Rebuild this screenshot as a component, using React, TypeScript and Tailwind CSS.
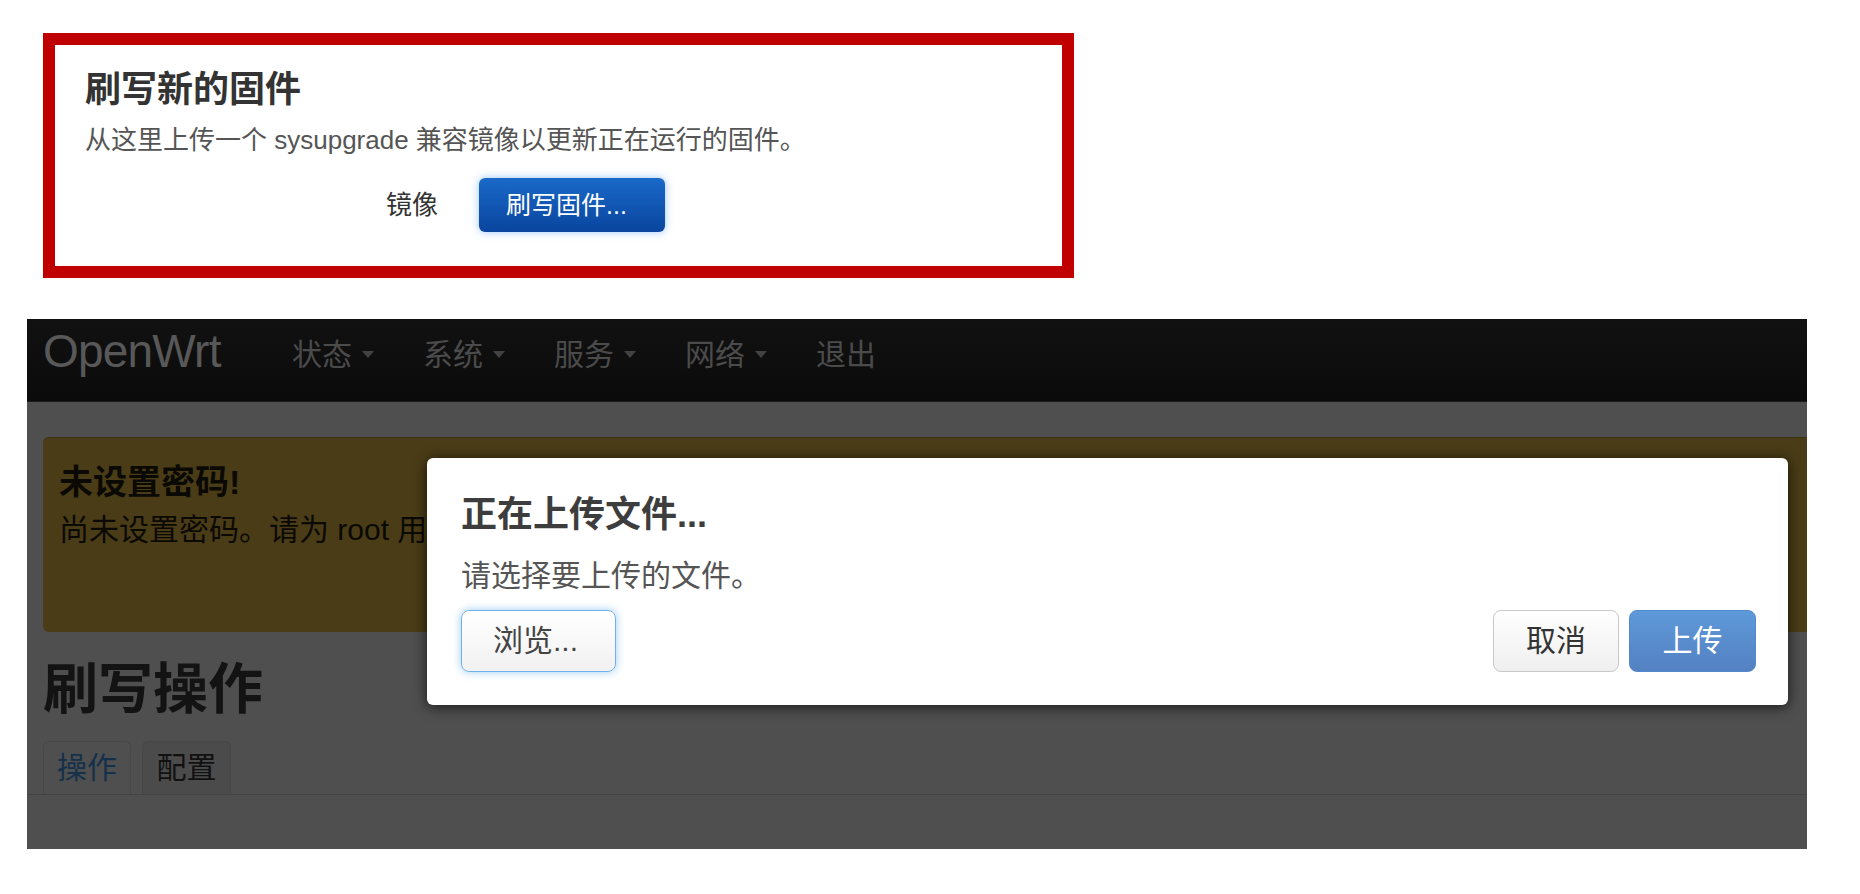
import React from "react";

const navItems = [
  { label: "状态", caret: true },
  { label: "系统", caret: true },
  { label: "服务", caret: true },
  { label: "网络", caret: true },
  { label: "退出", caret: false },
];

function Caret() {
  return <span className="inline-block w-0 h-0 border-x-[6.5px] border-x-transparent border-t-[7px] border-t-[#424242]" />;
}

export default function App() {
  return (
    <div className="w-[1860px] h-[894px] bg-white overflow-hidden font-['Liberation_Sans','Noto_Sans_CJK_SC',sans-serif]">
      {/* Top: highlighted firmware flash box */}
      <div className="pt-[33px] pl-[43px]">
        <div className="w-[1031px] h-[245px] border-[12px] border-[#c00000] bg-white pl-[30px] pt-[23px]">
          <h2 className="text-[36px] leading-[44px] font-bold text-[#333]">刷写新的固件</h2>
          <p className="mt-[11px] text-[26px] leading-[34px] text-[#555]">
            从这里上传一个 sysupgrade 兼容镜像以更新正在运行的固件。
          </p>
          <div className="mt-[21px] ml-[301px] flex items-center gap-[41px]">
            <span className="text-[26px] leading-[34px] text-[#333]">镜像</span>
            <button className="w-[186px] h-[54px] rounded-[6px] bg-linear-to-b from-[#1a69c9] to-[#0a459e] text-white text-[25px] leading-[30px] flex items-center pl-[27px] shadow-[0_0_9px_rgba(70,150,255,0.55)]">
              刷写固件...
            </button>
          </div>
        </div>
      </div>

      {/* Bottom: dimmed OpenWrt page with upload dialog */}
      <div className="mt-[41px] ml-[27px] w-[1780px] h-[530px] bg-[#4f4f4f] relative overflow-hidden">
        <div className="h-[83px] bg-linear-to-b from-[#111111] to-[#0b0b0b] border-b border-[#1c1c1c] flex">
          <div className="w-[265px] pl-[16px] pb-[18px] flex items-center text-[46px] text-[#585858] tracking-[-0.8px]">
            OpenWrt
          </div>
          {navItems.map((it) => (
            <div key={it.label} className="w-[131px] pb-[11px] flex items-center gap-[10px] text-[30px] leading-[36px] text-[#4b4b4b]">
              <span>{it.label}</span>
              {it.caret && <Caret />}
            </div>
          ))}
        </div>

        <div className="pl-[16px] pt-[35px]">
          <div className="h-[195px] mr-[-20px] rounded-[6px] bg-[#4a3c16] border-t border-[#3f3210] pl-[16px] pt-[24px]">
            <div className="text-[34px] leading-[40px] font-bold text-[#0b0904]">未设置密码!</div>
            <div className="mt-[10px] text-[30px] leading-[36px] text-[#0b0904]">
              尚未设置密码。请为 root 用户设置密码。
            </div>
          </div>

          <h1 className="mt-[25px] text-[55px] leading-[64px] font-bold text-[#131313]">刷写操作</h1>

          <div className="mt-[20px] ml-[-16px] pl-[16px] flex gap-[11px] border-b border-[#444]">
            <div className="w-[88px] h-[53px] rounded-t-[6px] border border-b-0 border-[#474747] flex items-center justify-center text-[30px] leading-[36px] text-[#15304b]">
              操作
            </div>
            <div className="w-[89px] h-[53px] rounded-t-[6px] border border-b-0 border-[#474747] bg-[#4b4b4b] flex items-center justify-center text-[30px] leading-[36px] text-[#111]">
              配置
            </div>
          </div>
        </div>

        {/* Modal dialog */}
        <div className="absolute left-[400px] top-[139px] w-[1361px] h-[247px] bg-white rounded-[6px] shadow-[0_2px_14px_rgba(0,0,0,0.7)] pt-[35px] pl-[34px] pr-[32px]">
          <div className="text-[36px] leading-[44px] font-semibold text-[#3d3d3d]">正在上传文件...</div>
          <div className="mt-[21px] text-[30px] leading-[36px] text-[#555]">请选择要上传的文件。</div>
          <div className="mt-[16px] flex justify-between">
            <button className="w-[155px] h-[62px] rounded-[8px] border border-[#72b2ec] bg-linear-to-b from-white to-[#f1f1f1] shadow-[0_0_9px_rgba(102,175,233,0.65)] text-[30px] leading-[36px] text-[#444] flex items-center pl-[31px]">
              浏览...
            </button>
            <div className="flex gap-[10px]">
              <button className="w-[126px] h-[62px] rounded-[8px] border border-[#c8c8c8] bg-linear-to-b from-white to-[#efefef] text-[30px] leading-[36px] text-[#333] flex items-center justify-center">
                取消
              </button>
              <button className="w-[127px] h-[62px] rounded-[8px] border border-[#5389cc] bg-linear-to-b from-[#5e99d9] to-[#5481c2] text-[30px] leading-[36px] text-white flex items-center justify-center">
                上传
              </button>
            </div>
          </div>
        </div>
      </div>
    </div>
  );
}
